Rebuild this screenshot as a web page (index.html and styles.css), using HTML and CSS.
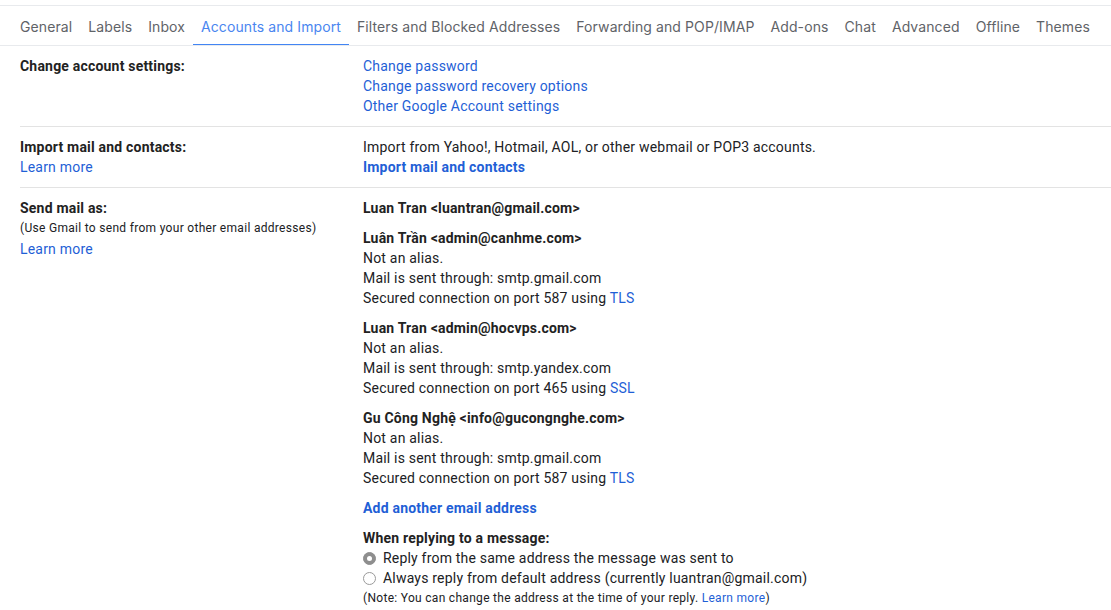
FILE: index.html
```html
<!DOCTYPE html>
<html>
<head>
<meta charset="utf-8">
<link rel="stylesheet" href="styles.css">
</head>
<body>
<div class="page">
  <nav class="tabs">
    <a class="tab">General</a>
    <a class="tab">Labels</a>
    <a class="tab">Inbox</a>
    <a class="tab active">Accounts and Import</a>
    <a class="tab">Filters and Blocked Addresses</a>
    <a class="tab">Forwarding and POP/IMAP</a>
    <a class="tab">Add-ons</a>
    <a class="tab">Chat</a>
    <a class="tab">Advanced</a>
    <a class="tab">Offline</a>
    <a class="tab">Themes</a>
  </nav>
  <div class="settings">
    <section class="row">
      <div class="label"><div class="title">Change account settings:</div></div>
      <div class="value">
        <a class="link">Change password</a>
        <a class="link">Change password recovery options</a>
        <a class="link">Other Google Account settings</a>
      </div>
    </section>
    <section class="row">
      <div class="label">
        <div class="title">Import mail and contacts:</div>
        <a class="link">Learn more</a>
      </div>
      <div class="value">
        <div>Import from Yahoo!, Hotmail, AOL, or other webmail or POP3 accounts.</div>
        <a class="link strong">Import mail and contacts</a>
      </div>
    </section>
    <section class="row last">
      <div class="label">
        <div class="title">Send mail as:</div>
        <div class="small">(Use Gmail to send from your other email addresses)</div>
        <a class="link">Learn more</a>
      </div>
      <div class="value stack">
        <div class="entry"><div class="title">Luan Tran &lt;luantran@gmail.com&gt;</div></div>
        <div class="entry">
          <div class="title">Luân Trần &lt;admin@canhme.com&gt;</div>
          <div>Not an alias.</div>
          <div>Mail is sent through: smtp.gmail.com</div>
          <div>Secured connection on port 587 using <a class="link inline">TLS</a></div>
        </div>
        <div class="entry">
          <div class="title">Luan Tran &lt;admin@hocvps.com&gt;</div>
          <div>Not an alias.</div>
          <div>Mail is sent through: smtp.yandex.com</div>
          <div>Secured connection on port 465 using <a class="link inline">SSL</a></div>
        </div>
        <div class="entry">
          <div class="title">Gu Công Nghệ &lt;info@gucongnghe.com&gt;</div>
          <div>Not an alias.</div>
          <div>Mail is sent through: smtp.gmail.com</div>
          <div>Secured connection on port 587 using <a class="link inline">TLS</a></div>
        </div>
        <div class="entry"><a class="link strong">Add another email address</a></div>
        <div class="entry">
          <div class="title">When replying to a message:</div>
          <label class="radio"><span class="dot checked"></span>Reply from the same address the message was sent to</label>
          <label class="radio"><span class="dot"></span>Always reply from default address (currently luantran@gmail.com)</label>
          <div class="note">(Note: You can change the address at the time of your reply. <a class="link inline">Learn more</a>)</div>
        </div>
      </div>
    </section>
  </div>
</div>
</body>
</html>
```
FILE: styles.css
```css
* { box-sizing: border-box; }
html, body { margin: 0; padding: 0; background: #fff; }
body {
  font-family: Roboto, "Liberation Sans", Arial, sans-serif;
  font-size: 14px;
  line-height: 20px;
  letter-spacing: 0.2px;
  color: #202124;
}
.page { padding-top: 5px; }
.tabs {
  display: flex;
  border-top: 1px solid #e8eaed;
  border-bottom: 1px solid #e8eaed;
  height: 41px;
  padding-left: 12px;
  overflow: hidden;
}
.tab {
  font-family: Inter, "Noto Sans", sans-serif;
  font-size: 14px;
  letter-spacing: 0.1px;
  white-space: nowrap;
  flex: none;
  color: #5f6368;
  padding: 3px 8px 0;
  display: flex;
  align-items: center;
  height: 41px;
  border-bottom: 3px solid transparent;
  margin-bottom: -1px;
}
.tab.active {
  color: #4a86f0;
  border-bottom-color: #4285f4;
}
.settings { padding-left: 20px; }
.row {
  display: flex;
  padding: 10px 0;
  border-bottom: 1px solid #e3e3e3;
}
.row.last { border-bottom: none; }
.label {
  width: 343px;
  flex: none;
  display: flex;
  flex-direction: column;
  align-items: flex-start;
}
.value {
  display: flex;
  flex-direction: column;
  align-items: flex-start;
}
.stack { gap: 10px; }
.entry {
  display: flex;
  flex-direction: column;
  align-items: flex-start;
}
.title { font-weight: 700; color: #222; }
.small { font-size: 12px; line-height: 21px; letter-spacing: 0.3px; }
.link { color: #1f5fd6; cursor: pointer; }
.link.strong { font-weight: 700; }
.link.inline { display: inline; }
.radio {
  display: flex;
  align-items: center;
  gap: 7px;
}
.dot {
  width: 13px;
  height: 13px;
  border-radius: 50%;
  border: 1px solid #9a9a9a;
  background: #fff;
  flex: none;
  display: flex;
  align-items: center;
  justify-content: center;
}
.dot.checked {
  background: #8e8e8e;
  border-color: #8e8e8e;
}
.dot.checked::after {
  content: "";
  width: 5px;
  height: 5px;
  border-radius: 50%;
  background: #fff;
}
.note { font-size: 12px; letter-spacing: 0.3px; }
```
